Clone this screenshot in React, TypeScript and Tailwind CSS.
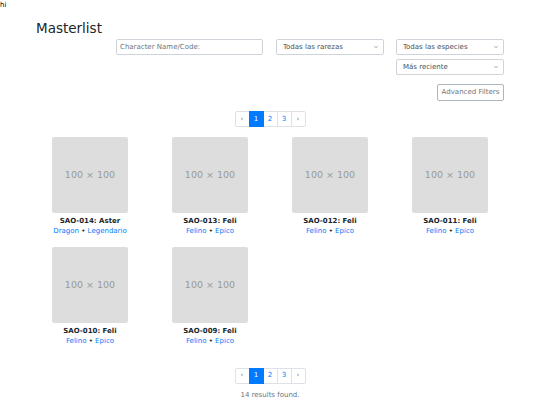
import React from "react";

const cards = [
  { code: "SAO-014: Aster", species: "Dragon", rarity: "Legendario" },
  { code: "SAO-013: Feli", species: "Felino", rarity: "Epico" },
  { code: "SAO-012: Feli", species: "Felino", rarity: "Epico" },
  { code: "SAO-011: Feli", species: "Felino", rarity: "Epico" },
  { code: "SAO-010: Feli", species: "Felino", rarity: "Epico" },
  { code: "SAO-009: Feli", species: "Felino", rarity: "Epico" },
];

function Chevron() {
  return (
    <svg
      className="absolute right-[6px] top-1/2 -translate-y-1/2 pointer-events-none"
      width="4"
      height="3"
      viewBox="0 0 4 3"
    >
      <path d="M0.4 0.7 L2 2.3 L3.6 0.7" fill="none" stroke="#6c757d" strokeWidth="0.7" />
    </svg>
  );
}

function Select({ label }: { label: string }) {
  return (
    <div className="relative w-[108px] h-[16px]">
      <div className="w-full h-full border border-[#ced4da] rounded-[2px] bg-white pl-[6px] flex items-center text-[#495057] text-[7px] leading-none">
        {label}
      </div>
      <Chevron />
    </div>
  );
}

function Pagination() {
  const items = ["‹", "1", "2", "3", "›"];
  return (
    <div className="flex justify-center">
      {items.map((it, i) => {
        const active = it === "1";
        return (
          <div
            key={i}
            className={
              "h-[16px] w-[15px] flex items-center justify-center border text-[7px] leading-none " +
              (i > 0 ? "-ml-px " : "") +
              (i === 0 ? "rounded-l-[2px] " : "") +
              (i === items.length - 1 ? "rounded-r-[2px] " : "") +
              (active
                ? "bg-[#007bff] border-[#007bff] text-white relative z-10"
                : "bg-white border-[#dee2e6] text-[#007bff]")
            }
          >
            {it === "‹" || it === "›" ? <span className="text-[#6c757d]">{it}</span> : it}
          </div>
        );
      })}
    </div>
  );
}

function Card({ code, species, rarity }: { code: string; species: string; rarity: string }) {
  return (
    <div className="flex flex-col items-center">
      <div className="w-[76px] h-[76px] rounded-[2px] bg-[#dddddd] flex items-center justify-center text-[#999999] text-[9.5px]">
        100 × 100
      </div>
      <div className="mt-[2.5px] font-bold leading-[10.5px] text-[#212529]">{code}</div>
      <div className="leading-[10.5px]">
        <span className="text-[#007bff]">{species}</span>
        <span className="text-[#212529]"> • </span>
        <span className="text-[#007bff]">{rarity}</span>
      </div>
    </div>
  );
}

export default function App() {
  return (
    <div className="w-[540px] min-h-[405px] bg-white text-[#212529] text-[7px] font-['DejaVu_Sans',sans-serif]">
      <div className="leading-[10px] text-black">hi</div>
      <div className="mx-[30px] px-[6px] pt-[10px]">
        <h1 className="text-[13.5px] leading-[16px] font-normal mb-[3px]">Masterlist</h1>
        <div className="flex justify-end">
          <div className="w-[147px] h-[16px] border border-[#ced4da] rounded-[2px] pl-[3px] flex items-center text-[#6c757d] leading-none mr-[13px]">
            Character Name/Code:
          </div>
          <div className="mr-[12px]">
            <Select label="Todas las rarezas" />
          </div>
          <Select label="Todas las especies" />
        </div>
        <div className="flex justify-end mt-[4px]">
          <Select label="Más reciente" />
        </div>
        <div className="flex justify-end mt-[9px]">
          <div className="h-[17px] w-[67px] border border-[#adb5bd] rounded-[2px] flex items-center justify-center text-[#6c757d] leading-none">
            Advanced Filters
          </div>
        </div>
        <div className="mt-[10px]">
          <Pagination />
        </div>
        <div className="grid grid-cols-4 mx-[-6px] mt-[10px] gap-y-[10.5px]">
          {cards.map((c) => (
            <Card key={c.code} {...c} />
          ))}
        </div>
        <div className="mt-[21px]">
          <Pagination />
        </div>
        <div className="mt-[6px] text-center leading-[10.5px] text-[#6c757d]">14 results found.</div>
      </div>
    </div>
  );
}
